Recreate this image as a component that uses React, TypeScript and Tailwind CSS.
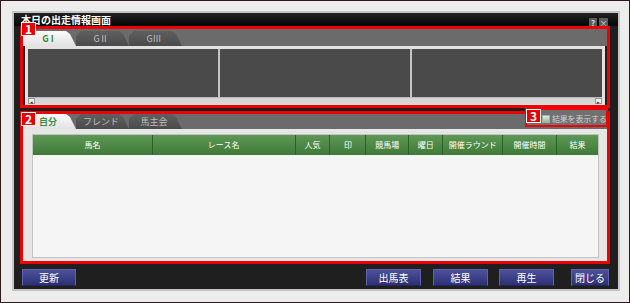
import clsx from "clsx";

const font = "font-['Noto_Sans_CJK_JP','Noto_Sans',sans-serif]";

const tabShape =
  "[clip-path:polygon(0_100%,0_5px,5px_0,calc(100%-10px)_0,calc(100%-6px)_3px,100%_100%)]";

function Tab({ label, active }: { label: string; active?: boolean }) {
  return (
    <div
      className={clsx(
        "flex h-[15px] w-[53px] items-center justify-center pr-[3px] text-[9px] leading-none",
        tabShape,
        active
          ? "bg-linear-to-b from-[#fbfbfb] to-[#e2e2e2] font-bold text-[#3f8a3f]"
          : "bg-linear-to-b from-[#5f5f5f] to-[#4b4b4b] text-[#bdbdbd]"
      )}
    >
      {label}
    </div>
  );
}

function Badge({ n, className }: { n: number; className?: string }) {
  return (
    <div
      className={clsx(
        "absolute z-20 flex h-[14px] w-[15px] items-center justify-center border border-white bg-[#e60000] text-[12px] font-bold leading-none text-white",
        className
      )}
    >
      {n}
    </div>
  );
}

function Btn({ label, className }: { label: string; className?: string }) {
  return (
    <button
      className={clsx(
        "flex h-[17px] items-center justify-center border border-[#5d63a8] border-b-[#23255a] bg-linear-to-b from-[#4c519c] to-[#2d3073] text-[10px] leading-none text-white",
        className
      )}
    >
      {label}
    </button>
  );
}

const columns: [string, number][] = [
  ["馬名", 119],
  ["レース名", 143],
  ["人気", 35],
  ["印", 36],
  ["競馬場", 43],
  ["曜日", 34],
  ["開催ラウンド", 60],
  ["開催時間", 54],
  ["結果", 42],
];

export default function App() {
  return (
    <div
      className={clsx(
        "h-[303px] w-[630px] overflow-hidden border border-[#2e1a1a] bg-[#ececec] pl-[11px] pt-[10px]",
        font
      )}
    >
      {/* window */}
      <div className="flex h-[280px] w-[608px] flex-col border-2 border-[#c4c4c4] bg-[#1f1f1f]">
        {/* title bar */}
        <div className="flex h-[13px] items-center bg-linear-to-b from-[#222] to-[#050505] pl-[7px] pr-[10px]">
          <span className="text-[10px] font-bold leading-none text-white">本日の出走情報画面</span>
          <div className="ml-auto mt-[6px] flex gap-[2px]">
            <div className="flex h-[9px] w-[8px] items-center justify-center bg-[#5c5c5c] text-[8px] font-bold leading-none text-[#d8d8d8]">
              ?
            </div>
            <div className="flex h-[9px] w-[9px] items-center justify-center bg-[#5c5c5c] text-[8px] leading-none text-[#d8d8d8]">
              ×
            </div>
          </div>
        </div>

        {/* section 1 */}
        <div className="relative ml-[6px] h-[82px] w-[590px] border-[3px] border-[#ee0000]">
          <Badge n={1} className="-left-[2px] -top-[7px]" />
          <div className="flex h-[17px] items-end bg-[#6b6b6b]">
            <Tab label="G I" active />
            <Tab label="GⅡ" />
            <Tab label="GⅢ" />
          </div>
          <div className="mx-[2px] flex h-[59px] flex-col bg-[#e2e2e2] px-[3px] pt-[3px]">
            <div className="flex h-[48px] gap-[2px] bg-[#c4c4c4]">
              <div className="flex-1 bg-[#4a4a4a]" />
              <div className="flex-1 bg-[#4a4a4a]" />
              <div className="flex-1 bg-[#4a4a4a]" />
            </div>
            <div className="flex h-[7px] items-stretch justify-between border-t border-[#bbb] bg-[#d6d6d6]">
              <div className="flex w-[7px] items-center justify-center border border-[#999] bg-[#eee] text-[5px] leading-none text-[#333]">
                ◂
              </div>
              <div className="flex w-[7px] items-center justify-center border border-[#999] bg-[#eee] text-[5px] leading-none text-[#333]">
                ▸
              </div>
            </div>
          </div>
        </div>

        {/* section 2 */}
        <div className="relative ml-[6px] mt-[3px] h-[153px] w-[590px] border-[3px] border-[#ee0000]">
          <Badge n={2} className="-left-[2px] -top-[2px]" />
          <div className="flex h-[15px] items-end bg-[#6b6b6b]">
            <Tab label="自分" active />
            <Tab label="フレンド" />
            <Tab label="馬主会" />
          </div>

          {/* show results toggle */}
          <div className="absolute -top-[6px] left-[502px] z-10 flex h-[19px] w-[83px] items-center border-2 border-[#ee0000] bg-[#707070] pl-[14px]">
            <Badge n={3} className="-left-[1px] -top-[1px]" />
            <div className="ml-[1px] mt-[3px] h-[8px] w-[8px] shrink-0 border border-[#aab] bg-linear-to-b from-[#dfeedd] to-[#8fbf86]" />
            <span className="ml-[2px] mt-[3px] whitespace-nowrap text-[8px] leading-none tracking-[-0.2px] text-[#d2d2d2]">
              結果を表示する
            </span>
          </div>

          <div className="h-[132px] bg-[#e6e6e6] pl-[9px] pr-[8px] pt-[5px]">
            <div className="flex h-[124px] w-[567px] flex-col border border-[#c2c2c2] bg-[#f5f5f5]">
              <div className="flex h-[20px] bg-linear-to-b from-[#5d9855] to-[#3f7a38]">
                {columns.map(([name, w], i) => (
                  <div
                    key={name}
                    style={{ width: w }}
                    className={clsx(
                      "flex items-center justify-center text-[8px] leading-none text-white",
                      i > 0 && "border-l border-[#2f5e2a]"
                    )}
                  >
                    {name}
                  </div>
                ))}
              </div>
            </div>
          </div>
        </div>

        {/* buttons */}
        <div className="mt-[5px] flex pl-[8px]">
          <Btn label="更新" className="w-[54px]" />
          <Btn label="出馬表" className="ml-[290px] w-[55px]" />
          <Btn label="結果" className="ml-[12px] w-[55px]" />
          <Btn label="再生" className="ml-[11px] w-[55px]" />
          <Btn label="閉じる" className="ml-[17px] w-[38px]" />
        </div>
      </div>
    </div>
  );
}
